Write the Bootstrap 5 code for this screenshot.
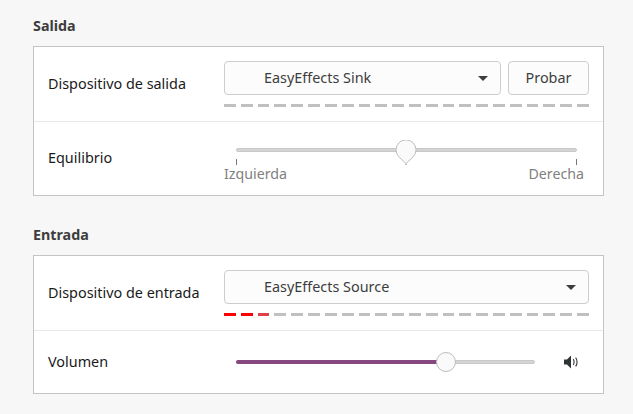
<!DOCTYPE html>
<html lang="es">
<head>
  <meta charset="UTF-8" />
  <meta name="viewport" content="width=device-width, initial-scale=1.0"/>
  <title>Sonido</title>
  <link href="https://cdn.jsdelivr.net/npm/bootstrap@5.3.3/dist/css/bootstrap.min.css" rel="stylesheet" />
  <style>
    html, body { height: 100%; overflow: hidden; }
    body {
      background: #f7f7f7;
      font-family: "Noto Sans", "Open Sans", sans-serif;
      font-size: 14.4px;
      color: #1a1a1a;
    }
    .page-wrap { padding: 17px 29px 0 33px; }
    .section-title { font-size: 14.3px; font-weight: 700; color: #3d3d3d; line-height: 18px; margin: 0 0 11px; }
    .section-gap { margin-top: 30px; }
    .sound-panel { background: #fff; border: 1px solid #c4c4c4; }
    .sound-row { padding-left: 14px; padding-right: 14px; }
    .sound-row + .sound-row { border-top: 1px solid #e8e8e8; }
    .row-device { height: 74px; padding-top: 14px; padding-bottom: 14px; }
    .row-balance { height: 74px; }
    .row-volume { height: 63px; }
    .row-label { width: 176px; flex: none; line-height: 20px; padding-bottom: 1px; }
    .combo-box {
      height: 34px; flex: 1; border: 1px solid #cdcdcd; border-radius: 4px; background: #fcfcfc;
      padding: 0 12px 0 39px; line-height: 30px; color: #3d3d3d;
    }
    .combo-arrow { width: 0; height: 0; border-left: 5px solid transparent; border-right: 5px solid transparent; border-top: 5px solid #3d3d3d; }
    .test-btn {
      width: 81px; height: 34px; flex: none; padding: 0; font-size: 14.4px; color: #3d3d3d;
      background: #fcfcfc; border: 1px solid #cdcdcd; border-radius: 4px;
    }
    .combo-line { gap: 7px; }
    .level-bar { gap: 5px; height: 3px; margin-top: 9px; }
    .level-bar span { flex: 1; background: #c0c0c0; }
    .level-bar .lvl-red { background: #ff0000; }
    .level-bar .lvl-fade { background: #e04048; }
    .slider-track { height: 4px; background: #d4d4d4; border: 1px solid #c8c8c8; border-radius: 2px; position: relative; }
    .slider-fill { position: absolute; left: -1px; top: -1px; height: 4px; background: #87477f; border-radius: 2px; }
    .slider-thumb { position: absolute; top: -9px; transform: translateX(-50%); display: block; }
    .volume-track .slider-thumb { top: -10px; }
    .balance-area { width: 365px; flex: none; padding-top: 26px; }
    .balance-track { margin: 0 12px; }
    .tick-row { margin: 7px 12px 0; height: 6px; position: relative; }
    .tick-mark { width: 1px; height: 6px; background: #777; }
    .tick-mid { position: absolute; top: 5px; width: 1px; height: 1px; background: #777; transform: translateX(-50%); }
    .scale-labels { color: #7f7f7f; font-size: 14.2px; line-height: 18px; padding-right: 5px; }
    .volume-area { width: 365px; flex: none; padding-left: 12px; padding-right: 10px; gap: 28px; }
    .volume-track { flex: 1; }
  </style>
</head>
<body>
<div class="page-wrap">
  <h2 class="section-title">Salida</h2>
  <div class="sound-panel">
    <div class="sound-row row-device d-flex align-items-center">
      <div class="row-label">Dispositivo de salida</div>
      <div class="flex-grow-1">
        <div class="d-flex combo-line">
          <div class="combo-box d-flex align-items-center justify-content-between">
            <span>EasyEffects Sink</span><span class="combo-arrow"></span>
          </div>
          <button type="button" class="btn test-btn">Probar</button>
        </div>
        <div class="level-bar d-flex" id="outBar"></div>
      </div>
    </div>
    <div class="sound-row row-balance d-flex">
      <div class="row-label d-flex align-items-center">Equilibrio</div>
      <div class="balance-area">
        <div class="slider-track balance-track">
          <svg class="slider-thumb" style="left:49.8%" width="22" height="25" viewBox="0 0 22 25">
            <path d="M11 23.5 3.6 16.6A10 10 0 1 1 18.4 16.6Z" fill="#fafafa" stroke="#bdbdbd"/>
          </svg>
        </div>
        <div class="tick-row d-flex justify-content-between">
          <span class="tick-mark"></span><span class="tick-mid" style="left:49.8%"></span><span class="tick-mark"></span>
        </div>
        <div class="scale-labels d-flex justify-content-between"><span>Izquierda</span><span>Derecha</span></div>
      </div>
    </div>
  </div>

  <h2 class="section-title section-gap">Entrada</h2>
  <div class="sound-panel">
    <div class="sound-row row-device d-flex align-items-center">
      <div class="row-label">Dispositivo de entrada</div>
      <div class="flex-grow-1">
        <div class="combo-box d-flex align-items-center justify-content-between">
          <span>EasyEffects Source</span><span class="combo-arrow"></span>
        </div>
        <div class="level-bar d-flex" id="inBar"></div>
      </div>
    </div>
    <div class="sound-row row-volume d-flex align-items-center">
      <div class="row-label">Volumen</div>
      <div class="volume-area d-flex align-items-center">
        <div class="slider-track volume-track">
          <div class="slider-fill" style="width:70.5%"></div>
          <svg class="slider-thumb" style="left:70.5%" width="22" height="22" viewBox="0 0 22 22">
            <circle cx="11" cy="11" r="9.5" fill="#fafafa" stroke="#bdbdbd"/>
          </svg>
        </div>
        <svg width="16" height="16" viewBox="0 0 16 16">
          <path d="M1 5.5H4L8 1.5V14.5L4 10.5H1Z" fill="#2e3436"/>
          <path d="M10.2 5.2C11.4 6.6 11.4 9.4 10.2 10.8M12.6 3.6C14.6 6 14.6 10 12.6 12.4" fill="none" stroke="#2e3436" stroke-width="1.1"/>
        </svg>
      </div>
    </div>
  </div>
</div>

<script src="https://cdn.jsdelivr.net/npm/bootstrap@5.3.3/dist/js/bootstrap.bundle.min.js"></script>
<script>
  // barras de nivel, 22 segmentos
  function fillBar(id, red) {
    const bar = document.getElementById(id);
    for (let i = 0; i < 22; i++) {
      const seg = document.createElement("span");
      if (i < red) seg.className = i === red - 1 ? "lvl-fade" : "lvl-red";
      bar.appendChild(seg);
    }
  }
  fillBar("outBar", 0);
  fillBar("inBar", 3);
</script>
</body>
</html>
